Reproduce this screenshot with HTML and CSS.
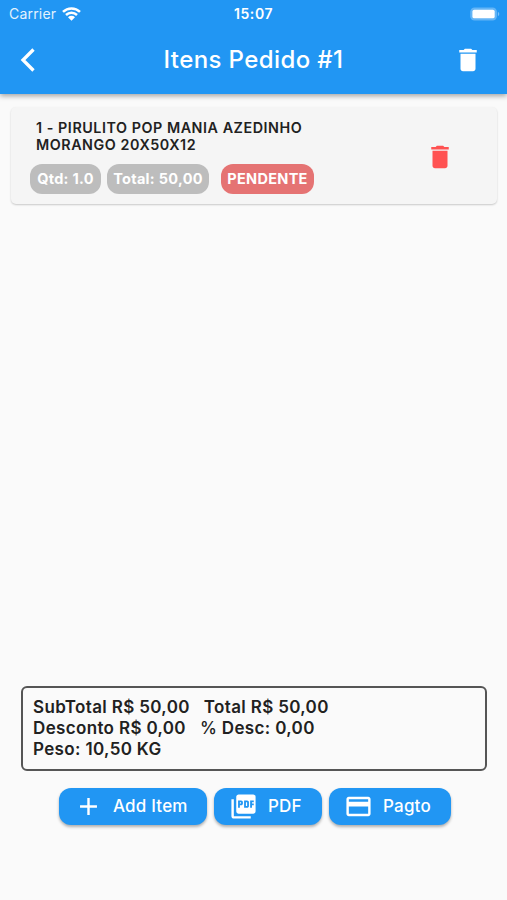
FILE: index.html
```html
<!DOCTYPE html>
<html lang="pt-BR">
<head>
    <meta charset="UTF-8">
    <meta name="viewport" content="width=device-width, initial-scale=1.0">
    <title>Itens Pedido</title>
    <link rel="stylesheet" href="styles.css">
</head>
<body>
    <header class="header">
        <div class="status-bar">
            <div class="carrier">
                <span>Carrier</span>
                <svg class="wifi" viewBox="0 0 19 14">
                    <path d="M1 4.900a12.200 12.200 0 0 1 17 0M4 8a8 8 0 0 1 11 0" fill="none" stroke="#fff" stroke-width="2.500"/>
                    <path d="M9.500 13.800L6 10.300a5 5 0 0 1 7 0z" fill="#fff"/>
                </svg>
            </div>
            <span class="time">15:07</span>
            <svg class="battery" viewBox="0 0 31 14">
                <rect x=".2" y=".2" width="27.600" height="13.600" rx="4.500" fill="#fff" fill-opacity=".3"/>
                <rect x="2.500" y="2.500" width="23" height="9" rx="2" fill="#fff"/>
                <path d="M28.800 4.800c2 .8 2 3.600 0 4.400z" fill="#fff" fill-opacity=".4"/>
            </svg>
        </div>
        <div class="toolbar">
            <svg class="icon-back" viewBox="0 0 16 24">
                <path d="M13.500 1.500L3 12l10.500 10.500" fill="none" stroke="#fff" stroke-width="3.300"/>
            </svg>
            <h1>Itens Pedido #1</h1>
            <svg class="icon-delete" viewBox="0 0 24 24">
                <path d="M6 19c0 1.100.9 2 2 2h8c1.100 0 2-.9 2-2V7H6v12zM19 4h-3.500l-1-1h-5l-1 1H5v2h14V4z"/>
            </svg>
        </div>
    </header>

    <main class="items">
        <div class="item-card">
            <div class="item-info">
                <h2>1 - PIRULITO POP MANIA AZEDINHO<br>MORANGO 20X50X12</h2>
                <div class="tags">
                    <span class="tag tag-qtd">Qtd: 1.0</span>
                    <span class="tag tag-total">Total: 50,00</span>
                    <span class="tag tag-status">PENDENTE</span>
                </div>
            </div>
            <svg class="icon-delete icon-red" viewBox="0 0 24 24">
                <path d="M6 19c0 1.100.9 2 2 2h8c1.100 0 2-.9 2-2V7H6v12zM19 4h-3.500l-1-1h-5l-1 1H5v2h14V4z"/>
            </svg>
        </div>
    </main>

    <footer class="footer">
        <div class="summary">
            <div class="summary-row"><span>SubTotal R$ 50,00</span><span>Total R$ 50,00</span></div>
            <div class="summary-row"><span>Desconto R$ 0,00</span><span><span class="percent">%</span> Desc: 0,00</span></div>
            <div class="summary-row"><span>Peso: 10,50 KG</span></div>
        </div>
        <div class="actions">
            <button type="button" class="btn btn-add">
                <svg viewBox="0 0 24 24"><path d="M19 13h-6v6h-2v-6H5v-2h6V5h2v6h6v2z"/></svg>
                <span>Add Item</span>
            </button>
            <button type="button" class="btn btn-pdf">
                <svg viewBox="0 0 24 24"><path d="M20 2H8c-1.100 0-2 .9-2 2v12c0 1.100.9 2 2 2h12c1.100 0 2-.9 2-2V4c0-1.100-.9-2-2-2zm-8.500 7.500c0 .83-.67 1.500-1.500 1.500H9v2H7.500V7H10c.83 0 1.500.67 1.500 1.500v1zm5 2c0 .83-.67 1.500-1.500 1.500h-2.500V7H15c.83 0 1.500.67 1.500 1.500v3zm4-3H19v1h1.500V11H19v2h-1.500V7h3v1.500zM9 9.500h1v-1H9v1zM4 6H2v14c0 1.100.9 2 2 2h14v-2H4V6zm10 5.500h1v-3h-1v3z"/></svg>
                <span>PDF</span>
            </button>
            <button type="button" class="btn btn-pay">
                <svg viewBox="0 0 24 24"><path d="M20 4H4c-1.110 0-1.990.89-1.990 2L2 18c0 1.110.89 2 2 2h16c1.110 0 2-.89 2-2V6c0-1.110-.89-2-2-2zm0 14H4v-6h16v6zm0-10H4V6h16v2z"/></svg>
                <span>Pagto</span>
            </button>
        </div>
    </footer>
</body>
</html>
```
FILE: styles.css
```css
* {
    margin: 0;
    padding: 0;
    box-sizing: border-box;
    font-family: 'Inter', sans-serif;
}

body {
    background: #fafafa;
    color: #212121;
    height: 100vh;
    display: flex;
    flex-direction: column;
    overflow: hidden;
}

svg {
    display: block;
    flex: none;
}

/* Header */
.header {
    height: 94px;
    background: #2196f3;
    color: white;
    box-shadow: 0 2px 5px rgba(0,0,0,0.35);
}

.status-bar {
    height: 27px;
    padding: 0 7px 0 9px;
    display: grid;
    grid-template-columns: 1fr auto 1fr;
    align-items: center;
    font-size: 14px;
}

.carrier {
    display: flex;
    align-items: center;
    gap: 6px;
    letter-spacing: 0.2px;
    color: #e3f2fd;
}

.wifi {
    width: 19px;
    height: 14px;
}

.time {
    font-weight: 600;
    letter-spacing: 0.6px;
    margin-right: 2px;
}

.battery {
    width: 30px;
    height: 14px;
    justify-self: end;
}

.toolbar {
    height: 65px;
    padding: 0 24px 0 20px;
    display: grid;
    grid-template-columns: 1fr auto 1fr;
    align-items: center;
}

.toolbar h1 {
    margin-left: 4px;
    font-size: 24px;
    font-weight: 500;
    letter-spacing: 0.4px;
}

.icon-back {
    width: 16px;
    height: 24px;
}

.icon-delete {
    width: 30px;
    height: 30px;
    fill: white;
    justify-self: end;
}

.icon-red {
    fill: #ff5252;
}

/* Item list */
.items {
    flex: 1;
    padding: 13px 10px 0 11px;
}

.item-card {
    height: 97px;
    padding: 12px 42px 0 19px;
    display: flex;
    justify-content: space-between;
    background: #f5f5f5;
    border-radius: 5px;
    box-shadow: 0 1px 2px rgba(0,0,0,0.2);
}

.item-card h2 {
    padding-left: 6px;
    font-size: 14.3px;
    line-height: 17px;
    font-weight: 600;
    letter-spacing: 0.55px;
}

.item-card .icon-delete {
    margin-top: 23px;
}

.tags {
    display: flex;
    margin-top: 11px;
}

.tag {
    height: 30px;
    line-height: 30px;
    border-radius: 12px;
    background: #bdbdbd;
    color: white;
    font-size: 14.5px;
    font-weight: 700;
    letter-spacing: 0.3px;
    text-align: center;
    white-space: nowrap;
}

.tag-qtd {
    width: 71px;
    margin-right: 6px;
}

.tag-total {
    width: 102px;
    margin-right: 12px;
}

.tag-status {
    width: 93px;
    background: #e57373;
}

/* Totals and actions */
.footer {
    padding: 0 20px 75px 21px;
}

.summary {
    height: 85px;
    padding: 9px 10px;
    border: 2px solid #555;
    border-radius: 6px;
}

.summary-row {
    display: flex;
    gap: 14px;
    font-size: 17px;
    line-height: 21px;
    font-weight: 600;
    letter-spacing: 0.35px;
}

.percent {
    font-weight: 500;
}

.actions {
    display: flex;
    justify-content: center;
    gap: 7px;
    margin: 17px 0 0 2px;
}

.btn {
    height: 37px;
    padding: 0 0 1px 15px;
    display: flex;
    align-items: center;
    gap: 10px;
    border: none;
    border-radius: 12px;
    background: #2196f3;
    color: white;
    font-size: 17px;
    font-weight: 500;
    letter-spacing: 0.2px;
    white-space: nowrap;
    box-shadow: 0 2px 3px rgba(0,0,0,0.3);
    cursor: pointer;
}

.btn svg {
    width: 29px;
    height: 29px;
    fill: white;
}

.btn-add {
    width: 148px;
}

.btn-pdf {
    width: 108px;
}

.btn-pay {
    width: 122px;
}
```
